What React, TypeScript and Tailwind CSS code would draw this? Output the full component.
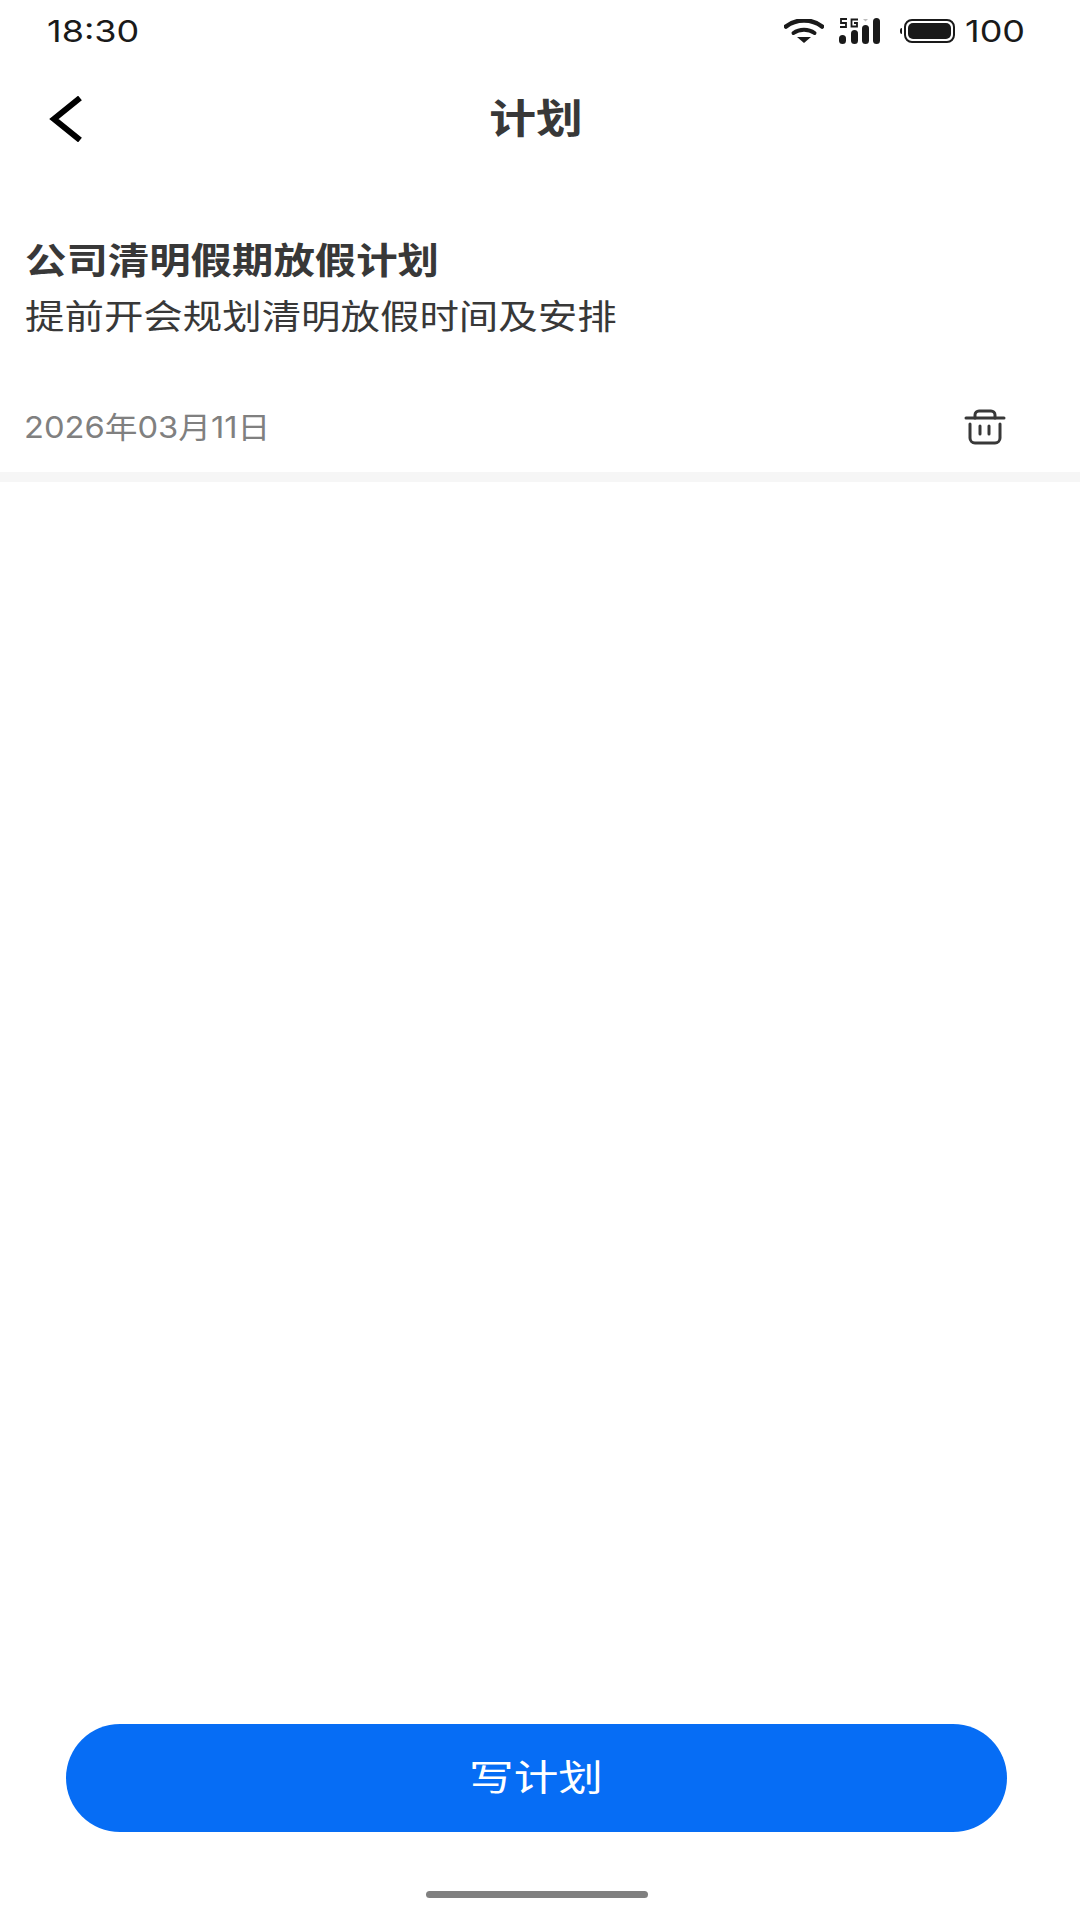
const cjk = "font-['Inter','Noto_Sans_CJK_SC',sans-serif]";

function StatusIcons() {
  return (
    <div className="flex items-center text-[#1a1a1a]">
      <svg width="40" height="24" viewBox="0 0 40 24" fill="none" className="mr-[15px]">
        <path d="M2 7.500C12 -0.500 28 -0.500 38 7.500" stroke="#1a1a1a" strokeWidth="4.500" strokeLinecap="round" />
        <path d="M9.500 14C15.500 9.500 24.500 9.500 30.500 14" stroke="#1a1a1a" strokeWidth="4" strokeLinecap="round" />
        <path d="M13 18h14L20 24Z" fill="#1a1a1a" />
      </svg>
      <svg width="42" height="26" viewBox="0 0 42 26" className="mr-[19px]">
        <rect x="0" y="17" width="7" height="9" rx="3.500" fill="#1a1a1a" />
        <rect x="12" y="12" width="7" height="14" rx="3.500" fill="#1a1a1a" />
        <rect x="23" y="7" width="7" height="19" rx="3.500" fill="#1a1a1a" />
        <rect x="34" y="0" width="7" height="26" rx="3.500" fill="#1a1a1a" />
        <path d="M24 1h5l-2.500 2.500Z" fill="#bbbbbb" />
        <path d="M8 1H2v4h5v4H1M19 1.500h-6.500v7h5.500V5h-3" fill="none" stroke="#1a1a1a" strokeWidth="1.800" />
      </svg>
      <div className="flex items-center mr-[10px]">
        <div className="w-[2px] h-[6px] bg-[#1a1a1a] rounded-l-sm mr-[2px]" />
        <div className="w-[51px] h-[24px] rounded-[8px] border-2 border-[#1a1a1a] p-[2px]">
          <div className="w-full h-full rounded-[5px] bg-[#1a1a1a]" />
        </div>
      </div>
      <span className="font-['Inter',sans-serif] text-[30px] leading-none w-[60px] origin-left scale-x-[1.2]">100</span>
    </div>
  );
}

export default function App() {
  return (
    <div className={`w-[1080px] h-[1920px] bg-white flex flex-col overflow-hidden ${cjk}`}>
      <div className="h-[62px] pl-[47px] pr-[55px] flex items-center justify-between shrink-0">
        <span className="font-['Inter',sans-serif] text-[30px] leading-none text-[#1a1a1a] origin-left scale-x-[1.2]">18:30</span>
        <StatusIcons />
      </div>
      <div className="h-[114px] pl-[47px] pr-[55px] grid grid-cols-[1fr_auto_1fr] items-center shrink-0">
        <svg width="36" height="46" viewBox="0 0 36 46" fill="none">
          <path d="M33 2 7 23l26 21" stroke="#000" strokeWidth="6" />
        </svg>
        <span className="text-[40px] leading-none font-bold text-[#383838] scale-x-[1.17]">计划</span>
      </div>
      <div className="pt-[60px] pl-[25px] pr-[75px] flex flex-col shrink-0">
        <div className="w-fit text-[36px] leading-[50px] font-bold text-[#383838] origin-left scale-x-[1.15]">公司清明假期放假计划</div>
        <div className="w-fit text-[34px] leading-[50px] mt-[6px] text-[#383838] origin-left scale-x-[1.16]">提前开会规划清明放假时间及安排</div>
        <div className="mt-[59px] h-[52px] flex items-center justify-between">
          <span className="text-[30px] leading-none text-[#808080] origin-left -translate-x-[1px] scale-x-[1.09]">2026年03月11日</span>
          <svg width="42" height="36" viewBox="0 0 42 36" fill="none" stroke="#383838" strokeWidth="3" strokeLinecap="round" strokeLinejoin="round" className="translate-x-[1px]">
            <path d="M2 9h38" />
            <path d="M11 9V6a4 4 0 0 1 4-4h12a4 4 0 0 1 4 4v3" />
            <path d="M6 15v14a5 5 0 0 0 5 5h20a5 5 0 0 0 5-5V15" />
            <path d="M16 17v8M25 17v8" />
          </svg>
        </div>
      </div>
      <div className="h-[10px] mt-[19px] bg-[#f6f6f6] shrink-0" />
      <div className="flex-1" />
      <div className="pl-[66px] pr-[73px] shrink-0">
        <div className="h-[108px] rounded-full bg-[#066df5] flex items-center justify-center">
          <span className="text-[36px] leading-none text-white scale-x-[1.24]">写计划</span>
        </div>
      </div>
      <div className="h-[88px] flex items-end justify-center pb-[22px] shrink-0">
        <div className="w-[222px] h-[7px] rounded-full bg-[#808080] -translate-x-[3px]" />
      </div>
    </div>
  );
}
